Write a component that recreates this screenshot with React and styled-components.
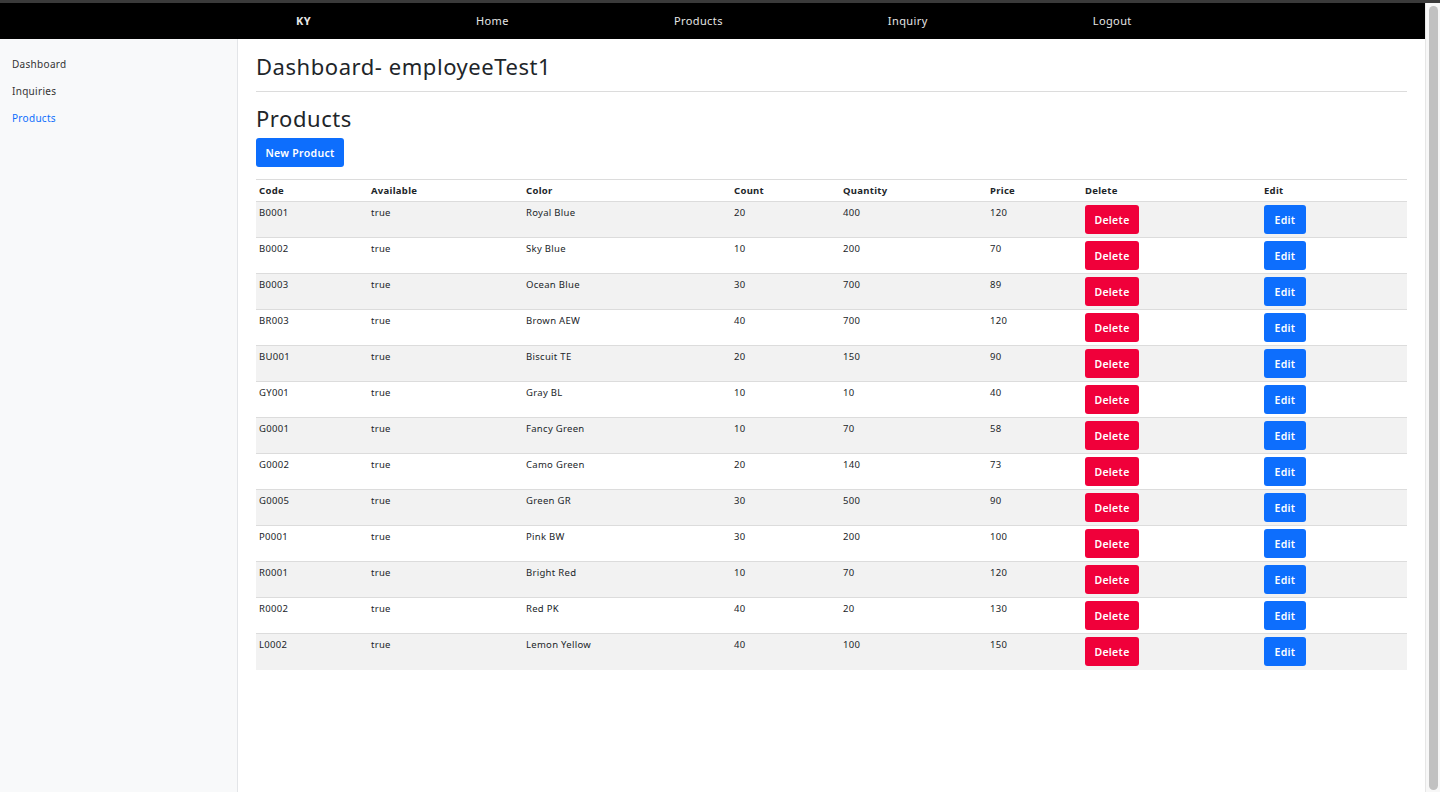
import React from "react";
import styled, { createGlobalStyle } from "styled-components";

const Global = createGlobalStyle`
  html, body { margin: 0; padding: 0; overflow: hidden; }
  body { font-family: "Noto Sans", "Liberation Sans", sans-serif; color: #212529; background: #fff; }
  * { box-sizing: border-box; }
`;

const Shell = styled.div`
  width: 1440px;
  height: 792px;
  display: flex;
  flex-direction: column;
  overflow: hidden;
`;

const ChromeStrip = styled.div`
  height: 3px;
  background: #3a3a3a;
  flex: none;
`;

const Body = styled.div`
  flex: 1;
  display: flex;
  min-height: 0;
`;

const Page = styled.div`
  flex: 1;
  display: flex;
  flex-direction: column;
  min-width: 0;
`;

const ScrollTrack = styled.div`
  width: 15px;
  flex: none;
  background: #f7f7f7;
  border-left: 1px solid #e6e6e6;
  padding: 3px 2px 2px 3px;
  display: flex;
`;

const ScrollThumb = styled.div`
  flex: 1;
  background: #c1c1c1;
  border-radius: 5px;
`;

const NavBar = styled.nav`
  height: 36px;
  background: #000;
  display: flex;
  align-items: center;
  padding-left: 296px;
  padding-bottom: 2px;
  gap: 165px;
  flex: none;
`;

const NavItem = styled.a`
  color: #e6e6e6;
  font-size: 11px;
  letter-spacing: 0.4px;
  font-weight: ${(p) => (p.$brand ? 700 : 400)};
  text-decoration: none;
  white-space: nowrap;
`;

const Main = styled.div`
  flex: 1;
  display: flex;
  min-height: 0;
`;

const Sidebar = styled.aside`
  width: 238px;
  flex: none;
  background: #f8f9fa;
  border-right: 1px solid #e3e5e8;
  padding-top: 12px;
  display: flex;
  flex-direction: column;
`;

const SideLink = styled.a`
  display: block;
  height: 27px;
  line-height: 27px;
  padding-left: 12px;
  font-size: 10px;
  letter-spacing: 0.3px;
  color: ${(p) => (p.$active ? "#0d6efd" : "#333")};
  text-decoration: none;
`;

const Content = styled.section`
  flex: 1;
  padding: 12px 18px 0 18px;
  min-width: 0;
`;

const Title = styled.h2`
  margin: 0;
  font-size: 22px;
  letter-spacing: 0.55px;
  font-weight: 400;
  line-height: 30px;
  padding-bottom: 10px;
  border-bottom: 1px solid #dcdcdc;
`;

const SubTitle = styled.h3`
  margin: 11px 0 0;
  font-size: 22px;
  letter-spacing: 0.55px;
  font-weight: 400;
  line-height: 30px;
`;

const Btn = styled.button`
  display: block;
  border: none;
  border-radius: 3px;
  color: #fff;
  font-family: inherit;
  font-size: 10.5px;
  letter-spacing: 0.3px;
  font-weight: 600;
  background: ${(p) => (p.$variant === "danger" ? "#f0003a" : "#0d6efd")};
  height: 29px;
  width: ${(p) => p.$w}px;
  padding: 0;
  cursor: pointer;
`;

const NewBtn = styled(Btn)`
  margin-top: 5px;
`;

const Table = styled.table`
  margin-top: 12px;
  width: 100%;
  border-collapse: collapse;
  border-top: 1px solid #dcdcdc;
  font-size: 9.5px;
  letter-spacing: 0.3px;
  table-layout: fixed;
`;

const Th = styled.th`
  text-align: left;
  font-weight: 700;
  padding: 4px 3px;
  height: 22px;
  line-height: 13px;
  border-bottom: 1px solid #dcdcdc;
`;

const Tr = styled.tr`
  background: ${(p) => (p.$odd ? "#f2f2f2" : "#fff")};
  & > td { border-bottom: 1px solid ${(p) => (p.$last ? "transparent" : "#dcdcdc")}; }
`;

const Td = styled.td`
  vertical-align: top;
  padding: 4px 3px 2px;
  height: 36px;
  line-height: 14px;
  white-space: nowrap;
`;

const TdBtn = styled(Td)`
  padding: 3px 3px 2px;
`;

const cols = [112, 155, 208, 109, 147, 95, 179, 146];

const rows = [
  ["B0001", "true", "Royal Blue", 20, 400, 120],
  ["B0002", "true", "Sky Blue", 10, 200, 70],
  ["B0003", "true", "Ocean Blue", 30, 700, 89],
  ["BR003", "true", "Brown AEW", 40, 700, 120],
  ["BU001", "true", "Biscuit TE", 20, 150, 90],
  ["GY001", "true", "Gray BL", 10, 10, 40],
  ["G0001", "true", "Fancy Green", 10, 70, 58],
  ["G0002", "true", "Camo Green", 20, 140, 73],
  ["G0005", "true", "Green GR", 30, 500, 90],
  ["P0001", "true", "Pink BW", 30, 200, 100],
  ["R0001", "true", "Bright Red", 10, 70, 120],
  ["R0002", "true", "Red PK", 40, 20, 130],
  ["L0002", "true", "Lemon Yellow", 40, 100, 150],
];

export default function App() {
  return (
    <Shell>
      <Global />
      <ChromeStrip />
      <Body>
        <Page>
          <NavBar>
            <NavItem $brand>KY</NavItem>
            <NavItem>Home</NavItem>
            <NavItem>Products</NavItem>
            <NavItem>Inquiry</NavItem>
            <NavItem>Logout</NavItem>
          </NavBar>
          <Main>
            <Sidebar>
              <SideLink>Dashboard</SideLink>
              <SideLink>Inquiries</SideLink>
              <SideLink $active>Products</SideLink>
            </Sidebar>
            <Content>
              <Title>Dashboard- employeeTest1</Title>
              <SubTitle>Products</SubTitle>
              <NewBtn $w={88}>New Product</NewBtn>
              <Table>
                <colgroup>
                  {cols.map((w, i) => (
                    <col key={i} style={{ width: w }} />
                  ))}
                </colgroup>
                <thead>
                  <tr>
                    {["Code", "Available", "Color", "Count", "Quantity", "Price", "Delete", "Edit"].map((h) => (
                      <Th key={h}>{h}</Th>
                    ))}
                  </tr>
                </thead>
                <tbody>
                  {rows.map((r, i) => (
                    <Tr key={r[0]} $odd={i % 2 === 0} $last={i === rows.length - 1}>
                      {r.map((c, j) => (
                        <Td key={j}>{c}</Td>
                      ))}
                      <TdBtn>
                        <Btn $variant="danger" $w={54}>Delete</Btn>
                      </TdBtn>
                      <TdBtn>
                        <Btn $w={42}>Edit</Btn>
                      </TdBtn>
                    </Tr>
                  ))}
                </tbody>
              </Table>
            </Content>
          </Main>
        </Page>
        <ScrollTrack>
          <ScrollThumb />
        </ScrollTrack>
      </Body>
    </Shell>
  );
}
